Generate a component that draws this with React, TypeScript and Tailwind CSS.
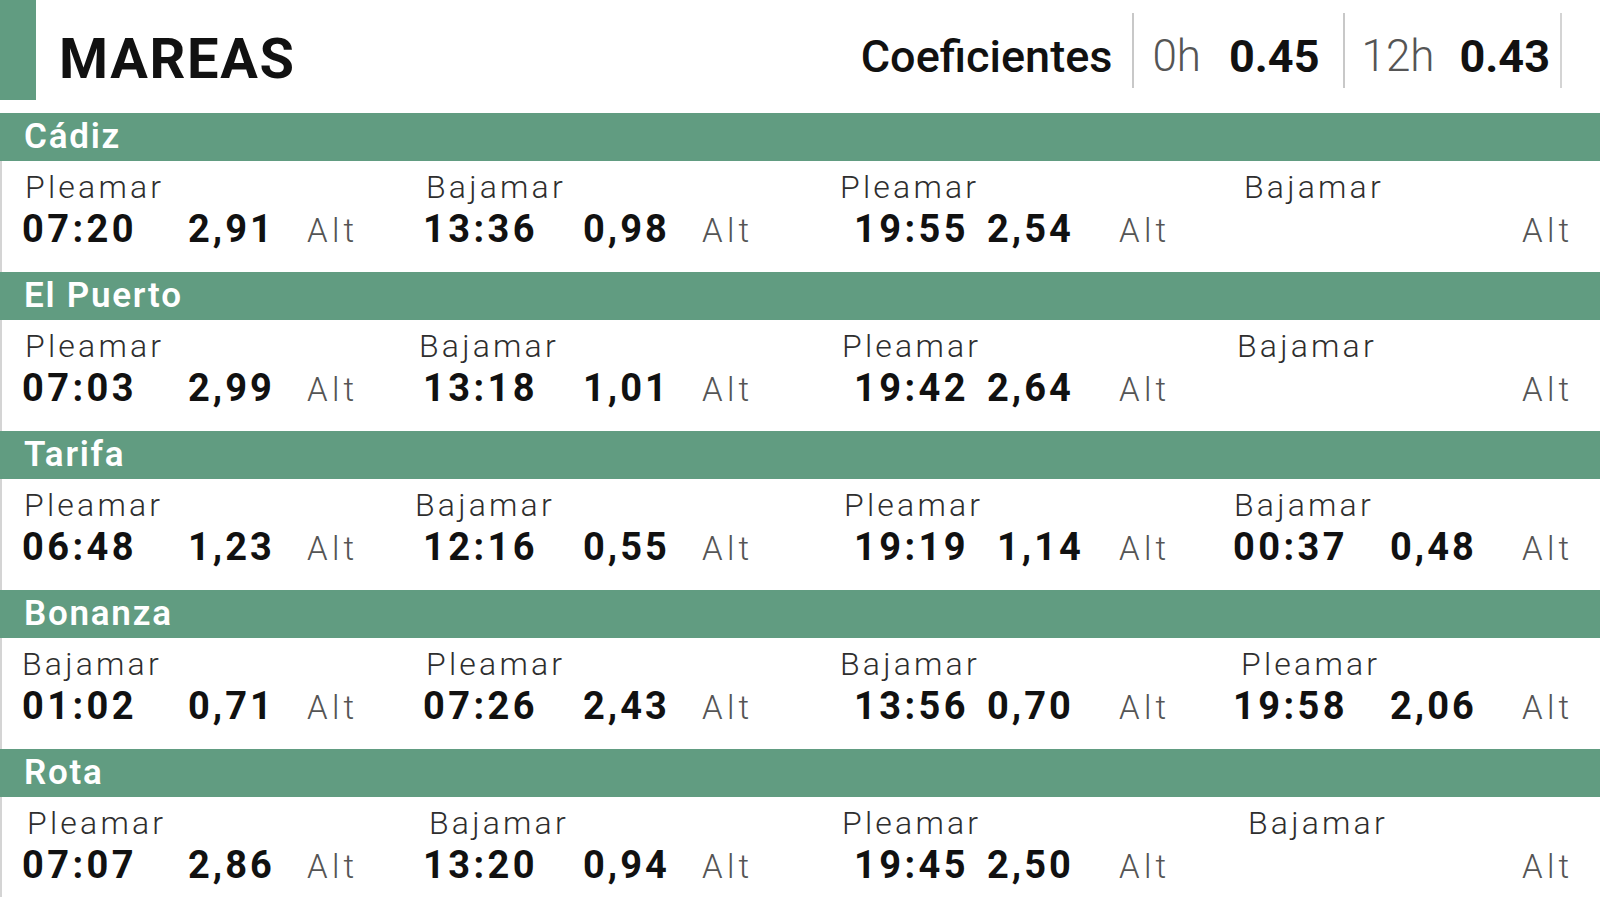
const GREEN = "bg-[#619c81]";

type Tide = {
  label: string;
  time?: string;
  height?: string;
  shift?: string;
  valueShift?: string;
};

type Port = {
  name: string;
  tides: Tide[];
};

const ports: Port[] = [
  {
    name: "Cádiz",
    tides: [
      { label: "Pleamar", time: "07:20", height: "2,91", shift: "ml-[3px]" },
      { label: "Bajamar", time: "13:36", height: "0,98", shift: "ml-[3px]" },
      { label: "Pleamar", time: "19:55", height: "2,54" },
      { label: "Bajamar", shift: "ml-[11px]" },
    ],
  },
  {
    name: "El Puerto",
    tides: [
      { label: "Pleamar", time: "07:03", height: "2,99", shift: "ml-[3px]" },
      { label: "Bajamar", time: "13:18", height: "1,01", shift: "-ml-[4px]" },
      { label: "Pleamar", time: "19:42", height: "2,64", shift: "ml-[2px]" },
      { label: "Bajamar", shift: "ml-[4px]" },
    ],
  },
  {
    name: "Tarifa",
    tides: [
      { label: "Pleamar", time: "06:48", height: "1,23", shift: "ml-[2px]" },
      { label: "Bajamar", time: "12:16", height: "0,55", shift: "-ml-[8px]" },
      { label: "Pleamar", time: "19:19", height: "1,14", shift: "ml-[4px]", valueShift: "pl-[10px]" },
      { label: "Bajamar", time: "00:37", height: "0,48", shift: "ml-[1px]" },
    ],
  },
  {
    name: "Bonanza",
    tides: [
      { label: "Bajamar", time: "01:02", height: "0,71" },
      { label: "Pleamar", time: "07:26", height: "2,43", shift: "ml-[3px]" },
      { label: "Bajamar", time: "13:56", height: "0,70" },
      { label: "Pleamar", time: "19:58", height: "2,06", shift: "ml-[8px]" },
    ],
  },
  {
    name: "Rota",
    tides: [
      { label: "Pleamar", time: "07:07", height: "2,86", shift: "ml-[5px]" },
      { label: "Bajamar", time: "13:20", height: "0,94", shift: "ml-[6px]" },
      { label: "Pleamar", time: "19:45", height: "2,50", shift: "ml-[2px]" },
      { label: "Bajamar", shift: "ml-[15px]" },
    ],
  },
];

// per column: offset of the time, width of the time slot, width of the height slot
const cols = [
  { pad: "", time: "w-[166px]", value: "w-[119px]" },
  { pad: "", time: "w-[160px]", value: "w-[119px]" },
  { pad: "pl-[14px]", time: "w-[133px]", value: "w-[132px]" },
  { pad: "", time: "w-[157px]", value: "w-[132px]" },
];

const TideCell = ({ tide, col }: { tide: Tide; col: number }) => {
  const c = cols[col];
  return (
    <div>
      <div className={`text-[32px] font-light leading-none tracking-[0.1em] text-[#2e2e2e] ${tide.shift ?? ""}`}>
        {tide.label}
      </div>
      <div className={`mt-[7px] flex items-baseline ${c.pad}`}>
        <span className={`${c.time} text-[38px] font-bold leading-none tracking-[0.09em] text-[#111]`}>
          {tide.time ?? "\u00a0"}
        </span>
        <span
          className={`${c.value} ${tide.valueShift ?? ""} text-[38px] font-bold leading-none tracking-[0.08em] text-[#111]`}
        >
          {tide.height ?? "\u00a0"}
        </span>
        <span className="text-[33px] font-light leading-none tracking-[0.13em] text-[#555]">Alt</span>
      </div>
    </div>
  );
};

const PortBlock = ({ port }: { port: Port }) => (
  <div>
    <div className={`h-[48px] ${GREEN} pl-[24px] text-[35px] font-semibold leading-[48px] tracking-[0.05em] text-white`}>
      {port.name}
    </div>
    <div className="grid h-[111px] grid-cols-[401px_417px_393px_1fr] border-l-2 border-[#d4d4d4] pl-[20px] pt-[10px]">
      {port.tides.map((tide, i) => (
        <TideCell key={i} tide={tide} col={i} />
      ))}
    </div>
  </div>
);

export default function App() {
  return (
    <div className="h-[897px] w-[1600px] overflow-hidden bg-white font-['Roboto',sans-serif]">
      <header className="flex h-[113px] items-start">
        <div className={`h-[100px] w-[36px] ${GREEN}`} />
        <h1 className="ml-[23px] mt-[31px] text-[56px] font-bold leading-none tracking-[0.03em] text-[#111]">
          MAREAS
        </h1>
        <div className="ml-auto mr-[38px] mt-[13px] flex h-[75px]">
          <span className="pt-[21px] text-[45px] font-medium leading-none text-[#111]">Coeficientes</span>
          <div className="ml-[20px] w-[2px] bg-[#c8c8c8]" />
          <span className="ml-[18px] pt-[21px] text-[44px] font-light leading-none text-[#555]">0h</span>
          <span className="ml-[28px] pt-[21px] text-[45px] font-bold leading-none text-[#111]">0.45</span>
          <div className="ml-[23px] w-[2px] bg-[#c8c8c8]" />
          <span className="ml-[17px] pt-[21px] text-[44px] font-light leading-none text-[#555]">12h</span>
          <span className="ml-[25px] pt-[21px] text-[45px] font-bold leading-none text-[#111]">0.43</span>
          <div className="ml-[10px] w-[2px] bg-[#d4d4d4]" />
        </div>
      </header>
      {ports.map((port) => (
        <PortBlock key={port.name} port={port} />
      ))}
    </div>
  );
}
